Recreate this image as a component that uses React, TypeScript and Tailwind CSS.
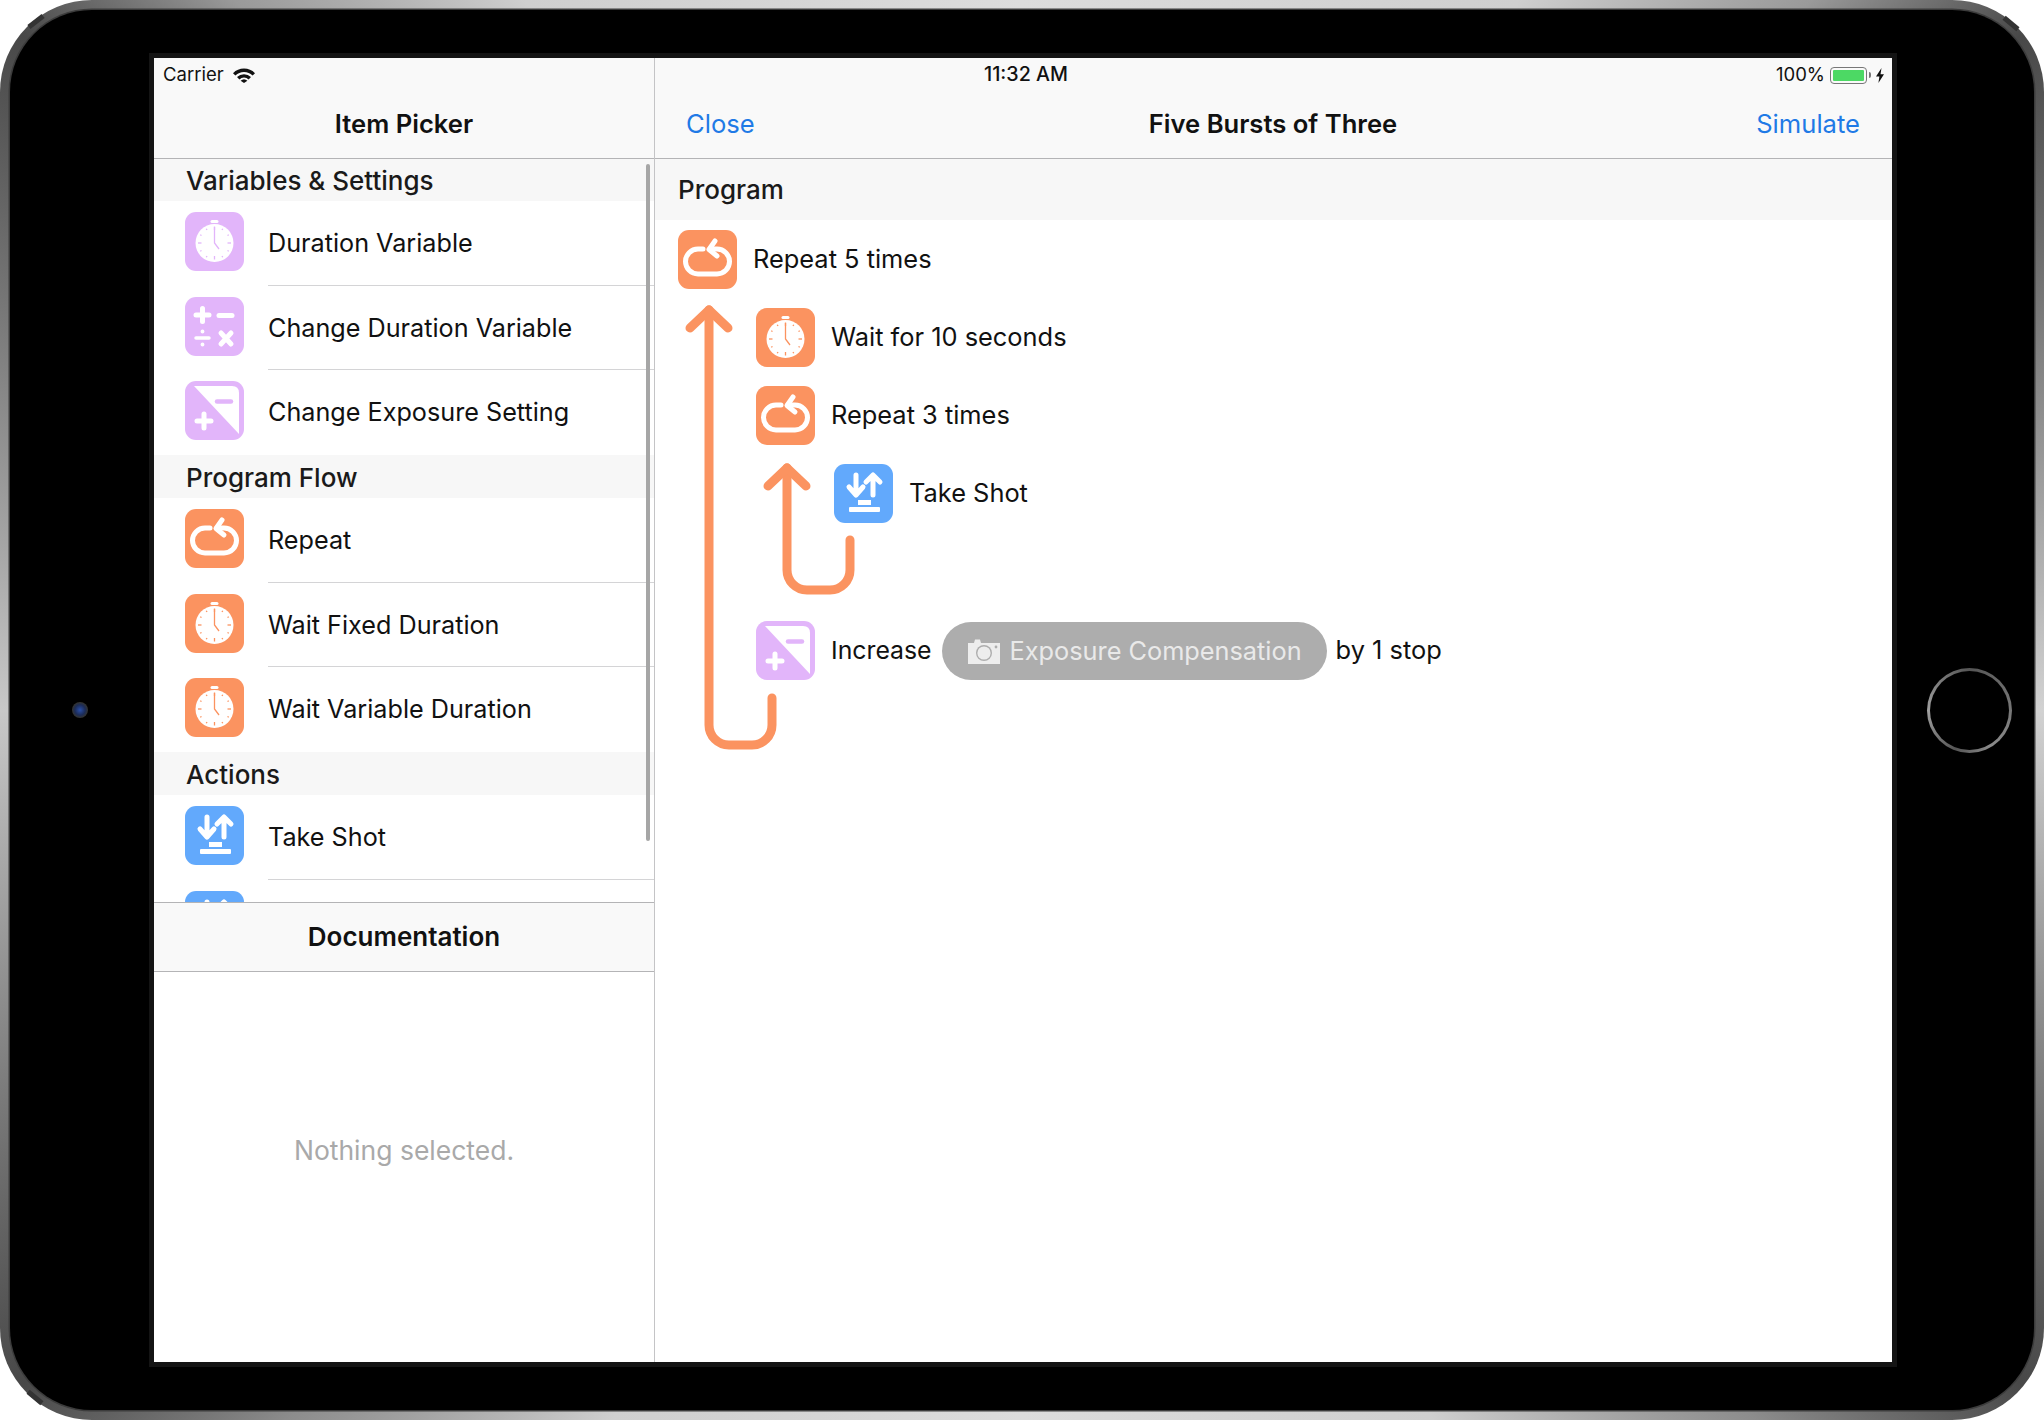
import React from 'react';

type IconKind = 'watch' | 'repeat' | 'math' | 'exposure' | 'shot';

const ORANGE = 'text-[#fb9360] bg-[#fb9360]';
const LILAC = 'text-[#e2b5fa] bg-[#e2b5fa]';
const BLUE = 'text-[#62a9fc] bg-[#62a9fc]';

const TICKS = [0, 30, 60, 90, 120, 150, 180, 210, 240, 270, 300, 330];

const IconGlyph = ({ kind }: { kind: IconKind }) => {
    if (kind === 'watch') {
        return (
            <>
                <rect x="25.5" y="8" width="8" height="3" rx="1.5" fill="#fff" />
                <circle cx="29.5" cy="31" r="19" fill="#fff" />
                {TICKS.map((a) => (
                    <line
                        key={a}
                        x1="29.5"
                        y1="14.5"
                        x2="29.5"
                        y2={a % 90 === 0 ? 18 : 16}
                        stroke="currentColor"
                        strokeWidth="1.3"
                        transform={`rotate(${a} 29.5 31)`}
                    />
                ))}
                <path d="M29.5 15V31L34 37" fill="none" stroke="currentColor" strokeWidth="1.3" />
            </>
        );
    }
    if (kind === 'repeat') {
        return (
            <g fill="none" stroke="#fff" strokeWidth="5" strokeLinecap="round" strokeLinejoin="round">
                <path d="M25 19H20A12.5 12.5 0 0 0 20 44H39A12.5 12.5 0 0 0 39 19H32" />
                <path d="M37 11L31 19.5L39 26" />
            </g>
        );
    }
    if (kind === 'math') {
        return (
            <g stroke="#fff" strokeWidth="5" strokeLinecap="round" fill="none">
                <path d="M11 18H24M17.5 11.5V24.5" />
                <path d="M34 18.5H47" />
                <path d="M11 41H24" strokeWidth="3.5" />
                <circle cx="17.5" cy="34.5" r="1.2" fill="#fff" strokeWidth="1.5" />
                <circle cx="17.5" cy="47.5" r="1.2" fill="#fff" strokeWidth="1.5" />
                <path d="M36 36L46 47M46 36L36 47" />
            </g>
        );
    }
    if (kind === 'exposure') {
        return (
            <>
                <path d="M9 5H47Q54 5 54 12V53Z" fill="#fff" />
                <path d="M32 20.5H46" stroke="currentColor" strokeWidth="4.5" strokeLinecap="round" />
                <path d="M12 40H26M19 33V47" stroke="#fff" strokeWidth="5" strokeLinecap="round" />
            </>
        );
    }
    return (
        <>
            <g fill="none" stroke="#fff" strokeWidth="5" strokeLinecap="round" strokeLinejoin="round">
                <path d="M22 11V30M15 23L22 31L29 23" />
                <path d="M39 12V31M32 18L39 11L46 18" />
            </g>
            <rect x="24" y="36" width="13" height="5" fill="#fff" />
            <rect x="15" y="43" width="31" height="5" rx="1" fill="#fff" />
        </>
    );
};

const TileIcon = ({ kind, color }: { kind: IconKind; color: string }) => (
    <div className={`${color} h-[59px] w-[59px] shrink-0 rounded-[11px]`}>
        <svg viewBox="0 0 59 59" className="w-full h-full">
            <IconGlyph kind={kind} />
        </svg>
    </div>
);

const SECTIONS: { title: string; items: { label: string; kind: IconKind; color: string }[] }[] = [
    {
        title: 'Variables & Settings',
        items: [
            { label: 'Duration Variable', kind: 'watch', color: LILAC },
            { label: 'Change Duration Variable', kind: 'math', color: LILAC },
            { label: 'Change Exposure Setting', kind: 'exposure', color: LILAC },
        ],
    },
    {
        title: 'Program Flow',
        items: [
            { label: 'Repeat', kind: 'repeat', color: ORANGE },
            { label: 'Wait Fixed Duration', kind: 'watch', color: ORANGE },
            { label: 'Wait Variable Duration', kind: 'watch', color: ORANGE },
        ],
    },
    {
        title: 'Actions',
        items: [{ label: 'Take Shot', kind: 'shot', color: BLUE }],
    },
];

const Row = ({ label, kind, color, last }: { label: string; kind: IconKind; color: string; last: boolean }) => (
    <div className="relative h-[84.67px] pl-[31px] pt-[11px] flex items-start">
        <TileIcon kind={kind} color={color} />
        <span className="ml-[24px] mt-[16px] text-[25.2px] leading-[30px] text-[#111]">{label}</span>
        {!last && <div className="absolute left-[114px] right-0 bottom-0 h-px bg-[#d4d4d6]" />}
    </div>
);

const ItemPicker = () => (
    <div className="w-[501px] shrink-0 flex flex-col border-r border-[#c4c4c6]">
        <div className="h-[101px] shrink-0 bg-[#f9f9f9] border-b border-[#b4b4b6] relative">
            <div className="flex items-center h-[32px] pl-[9px] pt-[2px] text-[18.5px] text-[#111]">
                Carrier
                <svg viewBox="0 0 22 15" className="ml-[9px] w-[22px] h-[15px]">
                    <path d="M0 5.2A15.5 15.5 0 0 1 22 5.2L19.6 7.6A12.2 12.2 0 0 0 2.4 7.6Z" fill="#111" />
                    <path d="M4 9A10 10 0 0 1 18 9L15.6 11.4A6.7 6.7 0 0 0 6.4 11.4Z" fill="#111" />
                    <path d="M7.6 12.8A5 5 0 0 1 14.4 12.8L11 15Z" fill="#111" />
                </svg>
            </div>
            <div className="text-center text-[25.6px] leading-[34px] mt-[17px] font-semibold text-[#111]">Item Picker</div>
        </div>
        <div className="relative h-[743px] overflow-hidden shrink-0">
            <div className="-mt-px">
                {SECTIONS.map((section) => (
                    <div key={section.title}>
                        <div className="h-[43px] bg-[#f7f7f7] pl-[32px] text-[26px] leading-[45px] font-medium text-[#1a1a1a]">
                            {section.title}
                        </div>
                        {section.items.map((item, i) => (
                            <Row
                                key={item.label}
                                label={item.label}
                                kind={item.kind}
                                color={item.color}
                                last={i === section.items.length - 1 && section.title !== 'Actions'}
                            />
                        ))}
                    </div>
                ))}
                <div className="pl-[31px] pt-[11px]">
                    <TileIcon kind="shot" color={BLUE} />
                </div>
            </div>
            {/* scroll indicator */}
            <div className="absolute right-[4px] top-[5px] w-[4px] h-[677px] rounded-full bg-[#a6a6a6]" />
        </div>
        <div className="h-[70px] shrink-0 bg-[#f9f9f9] border-y border-[#b4b4b6] flex items-center justify-center pb-[2px] text-[26px] font-semibold text-[#111]">
            Documentation
        </div>
        <div className="flex-1 flex items-center justify-center pb-[32px] text-[26.5px] text-[#a9a9a9] bg-white">
            Nothing selected.
        </div>
    </div>
);

const PROGRAM: { kind: IconKind; color: string; label: string; indent: string }[] = [
    { kind: 'repeat', color: ORANGE, label: 'Repeat 5 times', indent: 'ml-0' },
    { kind: 'watch', color: ORANGE, label: 'Wait for 10 seconds', indent: 'ml-[78px]' },
    { kind: 'repeat', color: ORANGE, label: 'Repeat 3 times', indent: 'ml-[78px]' },
    { kind: 'shot', color: BLUE, label: 'Take Shot', indent: 'ml-[156px]' },
];

const ProgramEditor = () => (
    <div className="flex-1 flex flex-col min-w-0">
        <div className="h-[101px] shrink-0 bg-[#f9f9f9] border-b border-[#b4b4b6]">
            <div className="flex items-center h-[32px] pr-[8px] pt-[2px] text-[18.5px] text-[#111]">
                <span className="ml-[329px] text-[19.7px] font-medium">11:32 AM</span>
                <span className="ml-auto">100%</span>
                <div className="ml-[5px] w-[37px] h-[17px] rounded-[4px] border border-[#777] p-[2px]">
                    <div className="w-full h-full rounded-[1px] bg-[#4cd964]" />
                </div>
                <div className="ml-[2px] w-[2px] h-[6px] rounded-r-sm bg-[#777]" />
                <svg viewBox="0 0 8 15" className="ml-[5px] w-[8px] h-[15px]">
                    <path d="M5.5 0L0 8.6H3.4L2.4 15L8 6.2H4.5Z" fill="#111" />
                </svg>
            </div>
            <div className="grid grid-cols-[1fr_auto_1fr] items-center mt-[17px] pl-[31px] pr-[32px] text-[25.6px] leading-[34px]">
                <span className="text-[#1f7ae6]">Close</span>
                <span className="font-semibold text-[#111]">Five Bursts of Three</span>
                <span className="text-right text-[#1f7ae6]">Simulate</span>
            </div>
        </div>
        <div className="h-[61px] shrink-0 bg-[#f7f7f7] pl-[23px] pt-[12px] text-[26px] leading-[38px] font-medium text-[#1a1a1a]">
            Program
        </div>
        <div className="relative flex-1 bg-white pl-[23px] pt-[10px]">
            <div className="flex flex-col gap-[19px]">
                {PROGRAM.map((step) => (
                    <div key={step.label} className={`${step.indent} flex items-center h-[59px]`}>
                        <TileIcon kind={step.kind} color={step.color} />
                        <span className="ml-[16px] text-[25.4px] text-[#111]">{step.label}</span>
                    </div>
                ))}
            </div>
            <div className="ml-[78px] mt-[98px] flex items-center h-[59px] text-[25.4px] text-[#111]">
                <TileIcon kind="exposure" color={LILAC} />
                <span className="ml-[16px] text-[24.8px] whitespace-nowrap">Increase</span>
                <div className="ml-[10px] h-[58px] w-[385px] shrink-0 rounded-full bg-[#adadad] flex items-center pl-[25px] text-[#e9e9e9]">
                    <svg viewBox="0 0 34 26" className="w-[34px] h-[26px]">
                        <path d="M1 5H7L8 1.5H13L14 5H33V26H1Z" fill="#ededed" />
                        <circle cx="17" cy="15" r="8" fill="#adadad" />
                        <circle cx="17" cy="15" r="6.6" fill="#ededed" />
                        <circle cx="29" cy="9" r="1.4" fill="#adadad" />
                    </svg>
                    <span className="ml-[9px] text-[25.3px] whitespace-nowrap">Exposure Compensation</span>
                </div>
                <span className="ml-[9px] whitespace-nowrap">by 1 stop</span>
            </div>
            {/* loop arrows sit on top of the program rows */}
            <svg className="absolute left-0 top-0 w-full h-full pointer-events-none" fill="none" stroke="#fb9360" strokeWidth="9" strokeLinecap="round" strokeLinejoin="round">
                <path d="M117 478V505A20 20 0 0 1 97 525H74A20 20 0 0 1 54 505V90" />
                <path d="M35 108L54 90L73 108" />
                <path d="M195 320V350A20 20 0 0 1 175 370H152A20 20 0 0 1 132 350V248" />
                <path d="M113 266L132 248L151 266" />
            </svg>
        </div>
    </div>
);

const App: React.FC = () => {
    return (
        <div className="w-[2044px] h-[1422px] bg-white overflow-hidden font-[Inter,sans-serif]">
            {/* device body */}
            <div className="relative w-[2044px] h-[1420px] rounded-[92px] p-[10px] bg-[conic-gradient(#dcdcdc_0deg,#cfcfcf_35deg,#9a9a9a_48deg,#484848_56deg,#6e6e6e_66deg,#d2d2d2_90deg,#6e6e6e_114deg,#484848_124deg,#8c8c8c_134deg,#cfcfcf_150deg,#dcdcdc_180deg,#cfcfcf_210deg,#8c8c8c_226deg,#484848_236deg,#6e6e6e_246deg,#c8c8c8_270deg,#6e6e6e_294deg,#484848_304deg,#9a9a9a_312deg,#cfcfcf_325deg,#dcdcdc_360deg)]">
                <div className="h-full rounded-[82px] bg-black flex items-center shadow-[0_0_0_1.5px_#3c3c3c]">
                    <div className="w-[144px] shrink-0 flex pl-[62px]">
                        <div className="w-[16px] h-[16px] rounded-full bg-[radial-gradient(circle,#2a4fa8_0%,#1c2c58_45%,#33332f_70%,#0a0a0a_100%)]" />
                    </div>
                    <div className="w-[1738px] h-[1304px] shrink-0 flex bg-white shadow-[0_0_0_5px_#141414]">
                        <ItemPicker />
                        <ProgramEditor />
                    </div>
                    <div className="flex-1 flex pl-[35px]">
                        <div className="w-[85px] h-[85px] rounded-full p-[3px] bg-[conic-gradient(#555_0deg,#777_90deg,#8a8a8a_150deg,#555_200deg,#a0a0a0_270deg,#555_360deg)]">
                            <div className="w-full h-full rounded-full bg-black" />
                        </div>
                    </div>
                </div>
                {/* antenna breaks on the frame */}
                <div className="absolute left-[27px] top-[19px] w-[18px] h-[5px] -rotate-[38deg] bg-[#333]" />
                <div className="absolute right-[24px] top-[21px] w-[18px] h-[5px] rotate-[40deg] bg-[#333]" />
                <div className="absolute left-[26px] bottom-[20px] w-[18px] h-[5px] rotate-[40deg] bg-[#333]" />
            </div>
        </div>
    );
};

export default App;
